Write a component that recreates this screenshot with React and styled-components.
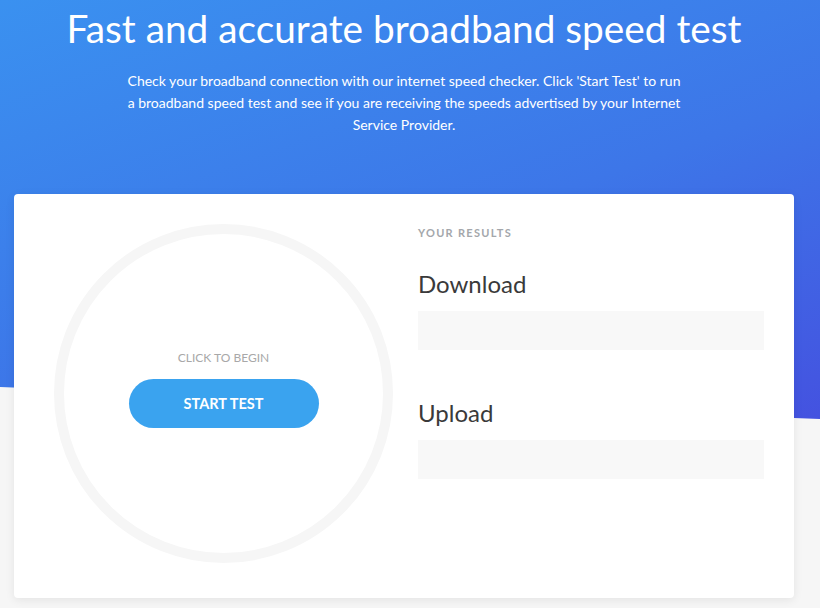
import React from "react";
import styled, { createGlobalStyle } from "styled-components";

const GlobalStyle = createGlobalStyle`
  html, body {
    margin: 0;
    padding: 0;
    background: #f6f6f6;
    font-family: Lato, "Open Sans", sans-serif;
  }
`;

export default function App() {
  return (
    <>
      <GlobalStyle />
      <Page>
        <Hero>
          <Title>Fast and accurate broadband speed test</Title>
          <Intro>
            Check your broadband connection with our internet speed checker.
            Click 'Start Test' to run a broadband speed test and see if you are
            receiving the speeds advertised by your Internet Service Provider.
          </Intro>
        </Hero>

        <Card>
          <Gauge>
            <Ring>
              <Hint>CLICK TO BEGIN</Hint>
              <StartButton type="button">START TEST</StartButton>
            </Ring>
          </Gauge>

          <Results>
            <Label>YOUR RESULTS</Label>
            <Metric>
              <MetricName>Download</MetricName>
              <MetricValue />
            </Metric>
            <Metric>
              <MetricName>Upload</MetricName>
              <MetricValue />
            </Metric>
          </Results>
        </Card>
      </Page>
    </>
  );
}

const Page = styled.main`
  width: 820px;
  min-height: 608px;
  overflow: hidden;
`;

const Hero = styled.section`
  height: 420px;
  box-sizing: border-box;
  padding: 5px 12px 0 0;
  display: flex;
  flex-direction: column;
  align-items: center;
  background: linear-gradient(160deg, #3a91f0 0%, #3d76e8 55%, #4452e0 100%);
  clip-path: polygon(0 0, 100% 0, 100% 419px, 0 387px);
  color: #fff;
`;

const Title = styled.h1`
  margin: 0;
  font-size: 38.8px;
  font-weight: 400;
  line-height: 46px;
  white-space: nowrap;
`;

const Intro = styled.p`
  margin: 19px 0 0;
  max-width: 556px;
  font-size: 14px;
  line-height: 22px;
  text-align: center;
`;

const Card = styled.section`
  position: relative;
  margin: -226px 0 0 14px;
  width: 780px;
  height: 404px;
  box-sizing: border-box;
  display: grid;
  grid-template-columns: 339px 346px;
  column-gap: 25px;
  padding: 0 30px 0 40px;
  background: #fff;
  border-radius: 4px;
  box-shadow: 0 2px 10px rgba(0, 0, 0, 0.08);
`;

const Gauge = styled.div`
  padding-top: 30px;
`;

const Ring = styled.div`
  width: 339px;
  height: 339px;
  box-sizing: border-box;
  border: 10px solid #f6f6f6;
  border-radius: 50%;
  display: flex;
  flex-direction: column;
  align-items: center;
  justify-content: center;
  padding-bottom: 8px;
`;

const Hint = styled.span`
  font-size: 12px;
  line-height: 14px;
  color: #a8a8a8;
`;

const StartButton = styled.button`
  margin-top: 14px;
  width: 190px;
  height: 49px;
  border: none;
  border-radius: 25px;
  background: #3aa3ef;
  color: #fff;
  font-family: inherit;
  font-size: 14.5px;
  font-weight: 700;
  cursor: pointer;
`;

const Results = styled.div`
  padding-top: 31px;
  display: flex;
  flex-direction: column;
`;

const Label = styled.span`
  font-size: 11px;
  line-height: 16px;
  font-weight: 700;
  letter-spacing: 1.3px;
  color: #a4a7ab;
  margin-bottom: 28px;
`;

const Metric = styled.div`
  display: flex;
  flex-direction: column;
  gap: 12px;
  & + & {
    margin-top: 48px;
  }
`;

const MetricName = styled.h2`
  margin: 0;
  font-size: 24px;
  font-weight: 400;
  line-height: 30px;
  color: #3a3a3a;
`;

const MetricValue = styled.div`
  height: 39px;
  background: #f8f8f8;
`;
